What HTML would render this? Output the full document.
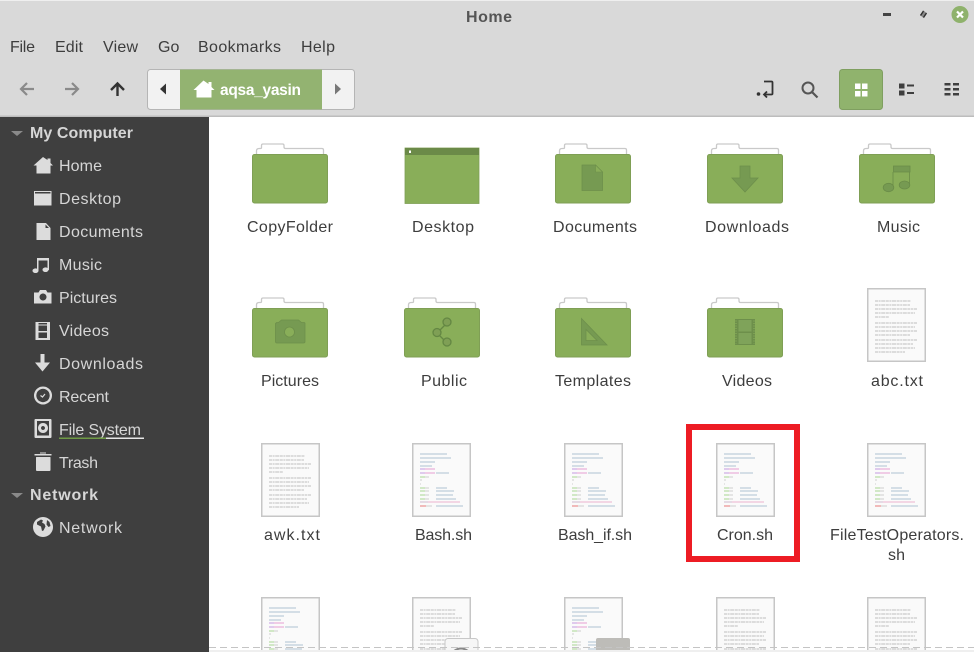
<!DOCTYPE html>
<html lang="en"><head><meta charset="utf-8"><title>Home</title>
<style>
html,body{margin:0;padding:0;width:974px;height:652px;overflow:hidden;background:#fff}
svg{display:block}
text{font-family:"Liberation Sans",sans-serif;font-size:16px}
.m{fill:#3d3d3d}
.s{fill:#d6d6d6}
.h{fill:#d6d6d6;font-weight:700}
.b{font-weight:700}
</style></head><body>
<svg width="974" height="652" viewBox="0 0 974 652" xmlns="http://www.w3.org/2000/svg">
<defs>
<g id="fback">
<path d="M4.500 12V8q0-2.500 2.500-2.500h1.500q1 0 1-1V2.500q0-1.500 1.500-1.500h19.500q1.500 0 1.500 1.500v1.500q0 1.500 1.500 1.500H70q1.500 0 1.500 1.500V12" fill="#fff" stroke="#c9c9c9" stroke-width="1.300"/>
<rect x="0.500" y="11.500" width="75" height="48.500" rx="2" fill="#89ae59" stroke="#7f9f55"/>
</g>
<g id="doc">
<rect x=".75" y=".75" width="57.500" height="72.500" fill="#fafafa" stroke="#c6c6c6" stroke-width="1.500"/>
</g>
<g id="txt" stroke="#bdbdbd" stroke-width=".9" stroke-dasharray="3 .6 2 .6 4 .6">
<path d="M8 13h36M8 17h35M8 21h42M8 25h40M8 29h14M8 35h42M8 39h40M8 43h42M8 47h35M8 52h42M8 56h38M8 60h40M8 64h30"/>
</g>
<g id="code" stroke-width=".9">
<path d="M8 11h27M8 15h31M8 19h15M8 23h12M24 30h13M24 45h11M24 48h18M24 52h17M24 56h20M24 63h27" stroke="#afc3d1"/>
<path d="M8 26h5M8 30h5" stroke="#c49be0"/>
<path d="M13 26h10M13 30h10" stroke="#e79fd2"/>
<path d="M8 34h5M8 45h5M8 48h5M8 52h5M8 56h5" stroke="#a8d692"/>
<path d="M13 34h4M13 45h4M13 48h4M13 52h4M13 56h4M8 37h2M8 41h1" stroke="#cfcfcf"/>
<path d="M8 59h8M8 63h0" stroke="#c9b4c9"/>
<path d="M16 59h32" stroke="#ecb2cf"/>
<path d="M8 63h6" stroke="#e66a6a"/>
<path d="M14 63h6" stroke="#c8c8c8"/>
</g>
</defs>

<!-- window chrome -->
<rect width="974" height="117" fill="#d9d9d9"/>
<rect width="974" height="1" fill="#efefef"/>
<rect y="115.500" width="974" height="1.500" fill="#bdbdbd"/>
<rect y="117" width="209" height="535" fill="#3f3f3f"/>
<rect x="209" y="117" width="765" height="535" fill="#fff"/>

<text x="466" y="22" class="b" style="fill:#555" textLength="46">Home</text>
<!-- window buttons -->
<rect x="883" y="13" width="8" height="3" fill="#444"/>
<path d="M923.500 10.500l3.500 3-3.500 4.500-3.500-3z" fill="#888"/>
<path d="M920 15l3-4.500 1 1-3 4.500zM927 13.500l-3 4.500-1-1 3-4.500z" fill="#2f2f2f"/>
<circle cx="960" cy="14.500" r="8.500" fill="#8fb26c"/>
<path d="M957 11.500l6 6M963 11.500l-6 6" stroke="#fff" stroke-width="2.200"/>

<!-- menu -->
<text class="m" x="10" y="52" textLength="25">File</text>
<text class="m" x="55" y="52" textLength="28">Edit</text>
<text class="m" x="103" y="52" textLength="35">View</text>
<text class="m" x="158" y="52">Go</text>
<text class="m" x="198" y="52" textLength="83">Bookmarks</text>
<text class="m" x="301" y="52" textLength="34">Help</text>

<!-- nav -->
<path d="M34 89H21M27 83l-6 6 6 6" fill="none" stroke="#8a8a8a" stroke-width="2.200"/>
<path d="M65 89h13M72 83l6 6-6 6" fill="none" stroke="#8a8a8a" stroke-width="2.200"/>
<path d="M117.500 96V84M111 90l6.500-6.500L124 90" fill="none" stroke="#333" stroke-width="2.400"/>

<!-- path bar -->
<rect x="147.500" y="69.500" width="207" height="40" rx="3" fill="#f2f2f2" stroke="#b5b5b5"/>
<rect x="180" y="69.500" width="142" height="40" fill="#93b371"/>
<path d="M166 83.500v11l-6-5.500z" fill="#333"/>
<path d="M335 83.500v11l6-5.500z" fill="#777"/>
<path d="M203.500 80.500L193.500 90h3v7.500h15V90h3l-3-3v-5h-3v2z" fill="#fff"/>
<text x="220" y="95" textLength="81" class="b" style="fill:#fff;font-size:15.500px">aqsa_yasin</text>

<!-- right toolbar -->
<circle cx="758.500" cy="94" r="1.800" fill="#333"/>
<path d="M764 81.500h7.500q1 0 1 1v11q0 1-1 1H764M767 91.500l-3 3 3 3" fill="none" stroke="#333" stroke-width="1.800"/>
<circle cx="808" cy="88" r="5.500" fill="none" stroke="#555" stroke-width="2"/>
<path d="M812 92l5.500 5.500" stroke="#555" stroke-width="2.200"/>
<rect x="839.500" y="69.500" width="43" height="40" rx="3" fill="#90b36d" stroke="#7f9f60"/>
<path d="M855 83.500h5.500V89H855zM862 83.500h5.500V89H862zM855 91h5.500v5.500H855zM862 91h5.500v5.500H862z" fill="#fff"/>
<path d="M899 83.500h5.500V88.500H899zM899 90.500h5.500V95.500H899z" fill="#3f3f3f"/>
<path d="M907 84.500h7v2h-7zM907 92h7v2h-7z" fill="#3f3f3f"/>
<path d="M944.500 83h6v2.500h-6zM953 83h6v2.500h-6zM944.500 88h6v2.500h-6zM953 88h6v2.500h-6zM944.500 93h6v2.500h-6zM953 93h6v2.500h-6z" fill="#3f3f3f"/>

<!-- sidebar -->
<path d="M11 131h12l-6 5z" fill="#8a8a8a"/>
<text class="h" x="30" y="138" textLength="103">My Computer</text>
<path d="M11 493h12l-6 5z" fill="#8a8a8a"/>
<text class="h" x="30" y="500" textLength="68">Network</text>

<text class="s" x="59" y="171" textLength="43">Home</text>
<text class="s" x="59" y="204" textLength="62">Desktop</text>
<text class="s" x="59" y="237" textLength="84">Documents</text>
<text class="s" x="59" y="270" textLength="43">Music</text>
<text class="s" x="59" y="303" textLength="58">Pictures</text>
<text class="s" x="59" y="336" textLength="50">Videos</text>
<text class="s" x="59" y="369" textLength="84">Downloads</text>
<text class="s" x="59" y="402" textLength="50">Recent</text>
<text class="s" x="59" y="435" textLength="82">File System</text>
<text class="s" x="59" y="468" textLength="39">Trash</text>
<text class="s" x="59" y="533" textLength="63">Network</text>

<g fill="#dcdcdc">
<path d="M43 157L33.500 165.500h3v8h14v-8h2.500l-2.500-2.500v-4.500h-3v1.500z"/>
<path fill-rule="evenodd" d="M34 191h17.500v14.500H34zM35 192v1.500h15.500V192z"/>
<path fill-rule="evenodd" d="M36.500 223h9.500l4.500 5v12h-14zM45.500 224.500v3.500h3.500z"/>
<path d="M35.500 273a3 2.300 0 1 1 .01 0zM45.500 272a3 2.300 0 1 1 .01 0z"/>
<path d="M37 258h12v12h-1.500v-9.500h-9V271H37z"/>
<path fill-rule="evenodd" d="M34 292.500h4.500l1.500-2.500h6l1.500 2.500h4v11H34zM43 293.500a3.500 3.500 0 1 0 .01 0z"/>
<path fill-rule="evenodd" d="M35.500 322h14.500v18H35.500zM38.500 323v1.500h8.500V323zM38.500 325.500v5.500h8.500v-5.500zM38.500 332.500v5.500h8.500v-5.500z"/>
<path d="M40.500 354h4v8.500h5.500l-7.500 9-7.500-9h5.500z"/>
<path fill-rule="evenodd" d="M43 386.500a9 9 0 1 0 .01 0zM43 388.800a6.700 6.700 0 1 1-.01 0z"/>
<path fill-rule="evenodd" d="M35.500 419h15q1 0 1 1v17q0 1-1 1h-15q-1 0-1-1v-17q0-1 1-1zM37 421v14.500h12V421zM43 423a5 5 0 1 0 .01 0zM43 426a2 2 0 1 1-.01 0z"/>
<path d="M34.500 454h17v1.500h-17zM40 452.500h6v1h-6zM36 457h14q.5 0 .5.5v12.500q0 1-1 1h-12.500q-1 0-1-1v-12.500q0-.5.5-.5z"/>
<path fill-rule="evenodd" d="M43 517a10 10 0 1 0 .01 0zM37 522l4-2.500 2 1-1 2 2.500 1.500 1 2.500-2 4-1.500.5-1-4.500-4-2zM47 520l2.500 2 1 4-2 1-2-2.500z"/>
</g>
<path d="M40.500 395.500l2 1.500 2.500-3" fill="none" stroke="#dcdcdc" stroke-width="1.200"/>
<rect x="59" y="437.500" width="47" height="1.500" fill="#6f9a46"/>
<rect x="106" y="437.500" width="38" height="1.500" fill="#e6e6e6"/>

<!-- row 1 -->
<use href="#fback" x="252" y="143"/>
<rect x="405" y="148" width="74" height="55.500" fill="#89ae59" stroke="#7f9f55" stroke-width=".8"/>
<rect x="405" y="148" width="74" height="7" fill="#6b8a48"/>
<rect x="409" y="150.500" width="2" height="2.500" fill="#fff"/>
<use href="#fback" x="555" y="143"/>
<path d="M582 165h13.500l7 7v18.500H582z" fill="#769a52" stroke="#6d8f4b" stroke-width=".8"/>
<path d="M595.500 165l7 7h-7z" fill="#89ae59" stroke="#6d8f4b" stroke-width=".6"/>
<use href="#fback" x="707" y="143"/>
<path d="M740 166h10v12h8l-13 14-13-14h8z" fill="#769a52" stroke="#6d8f4b" stroke-width=".8"/>
<use href="#fback" x="859" y="143"/>
<g fill="#769a52" stroke="#6a8c48" stroke-width=".8">
<path d="M893.500 166h16.500v6h-16.500z"/>
<path d="M893 172v15.500M909.500 172v13" fill="none"/>
<ellipse cx="888.500" cy="187.500" rx="5.300" ry="4.200"/>
<ellipse cx="904.500" cy="185" rx="5.300" ry="4"/>
</g>

<!-- row 2 -->
<use href="#fback" x="252" y="297"/>
<path d="M275.500 323.500v18q0 1.500 1.500 1.500h26.500q1.500 0 1.500-1.500v-18q0-1-1-1h-2.500l-3-2.500h-17l-3 2.500h-2q-.5 0-.5 1z" fill="#769a52" stroke="#6d8f4b" stroke-width=".8"/>
<circle cx="289.500" cy="332" r="5" fill="#89ae59" stroke="#6d8f4b" stroke-width=".8"/>
<use href="#fback" x="404" y="297"/>
<g fill="#7f9f55" stroke="#648743" stroke-width="1.300">
<path d="M437 333l9-9M437 333l9 9" fill="none"/>
<circle cx="447" cy="322" r="4"/><circle cx="437" cy="332.500" r="4"/><circle cx="447" cy="342" r="4"/>
</g>
<use href="#fback" x="555" y="297"/>
<path fill-rule="evenodd" d="M581.500 318.500l25.500 26.500h-25.500zM586 329.500v11h11z" fill="#769a52" stroke="#6d8f4b" stroke-width=".8"/>
<use href="#fback" x="707" y="297"/>
<rect x="735" y="319" width="20" height="26" fill="#6d8f4b"/>
<path d="M738.500 320h13v11.500h-13zM738.500 333h13v11h-13z" fill="#7fa35a"/>
<path d="M736 320.500v23M754 320.500v23" stroke="#89ae59" stroke-dasharray="1 1.500" stroke-width="1.200"/>
<use href="#doc" x="867" y="288"/><use href="#txt" x="867" y="288"/>

<text class="m" x="247" y="232" textLength="86">CopyFolder</text>
<text class="m" x="412" y="232" textLength="62">Desktop</text>
<text class="m" x="553" y="232" textLength="84">Documents</text>
<text class="m" x="705" y="232" textLength="84">Downloads</text>
<text class="m" x="877" y="232" textLength="43">Music</text>
<text class="m" x="261" y="386" textLength="58">Pictures</text>
<text class="m" x="421" y="386" textLength="46">Public</text>
<text class="m" x="555" y="386" textLength="76">Templates</text>
<text class="m" x="722" y="386" textLength="50">Videos</text>
<text class="m" x="871" y="386" textLength="52">abc.txt</text>

<!-- row 3 -->
<use href="#doc" x="261" y="443"/><use href="#txt" x="261" y="443"/>
<use href="#doc" x="412" y="443"/><use href="#code" x="412" y="443"/>
<use href="#doc" x="564" y="443"/><use href="#code" x="564" y="443"/>
<use href="#doc" x="716" y="443"/><use href="#code" x="716" y="443"/>
<use href="#doc" x="867" y="443"/><use href="#code" x="867" y="443"/>
<text class="m" x="264" y="540" textLength="56">awk.txt</text>
<text class="m" x="415" y="540" textLength="57">Bash.sh</text>
<text class="m" x="558" y="540" textLength="74">Bash_if.sh</text>
<text class="m" x="717" y="540" textLength="56">Cron.sh</text>
<text class="m" x="830" y="540" textLength="134">FileTestOperators.</text>
<text class="m" x="888" y="560" textLength="17">sh</text>
<rect x="689" y="427" width="108" height="132" fill="none" stroke="#ed1c24" stroke-width="6"/>

<!-- row 4 -->
<use href="#doc" x="261" y="597"/><use href="#code" x="261" y="597"/>
<use href="#doc" x="412" y="597"/><use href="#txt" x="412" y="597"/>
<use href="#doc" x="564" y="597"/><use href="#code" x="564" y="597"/>
<use href="#doc" x="716" y="597"/><use href="#txt" x="716" y="597"/>
<use href="#doc" x="867" y="597"/><use href="#txt" x="867" y="597"/>

<!-- bottom artefacts -->
<rect x="445" y="638.500" width="33" height="14" rx="3" fill="#f6f6f6" stroke="#c8c8c8"/>
<path d="M454 651q7-5 14 0" fill="none" stroke="#888" stroke-width="2"/>
<rect x="596" y="638" width="34" height="14" rx="2" fill="#bdbcb8"/>
<path d="M209 647.500H974" stroke="#c4c4c4" stroke-width="1" stroke-dasharray="7 4"/>
<rect x="209" y="650" width="765" height="2" fill="#efefef"/>
</svg>
</body></html>
